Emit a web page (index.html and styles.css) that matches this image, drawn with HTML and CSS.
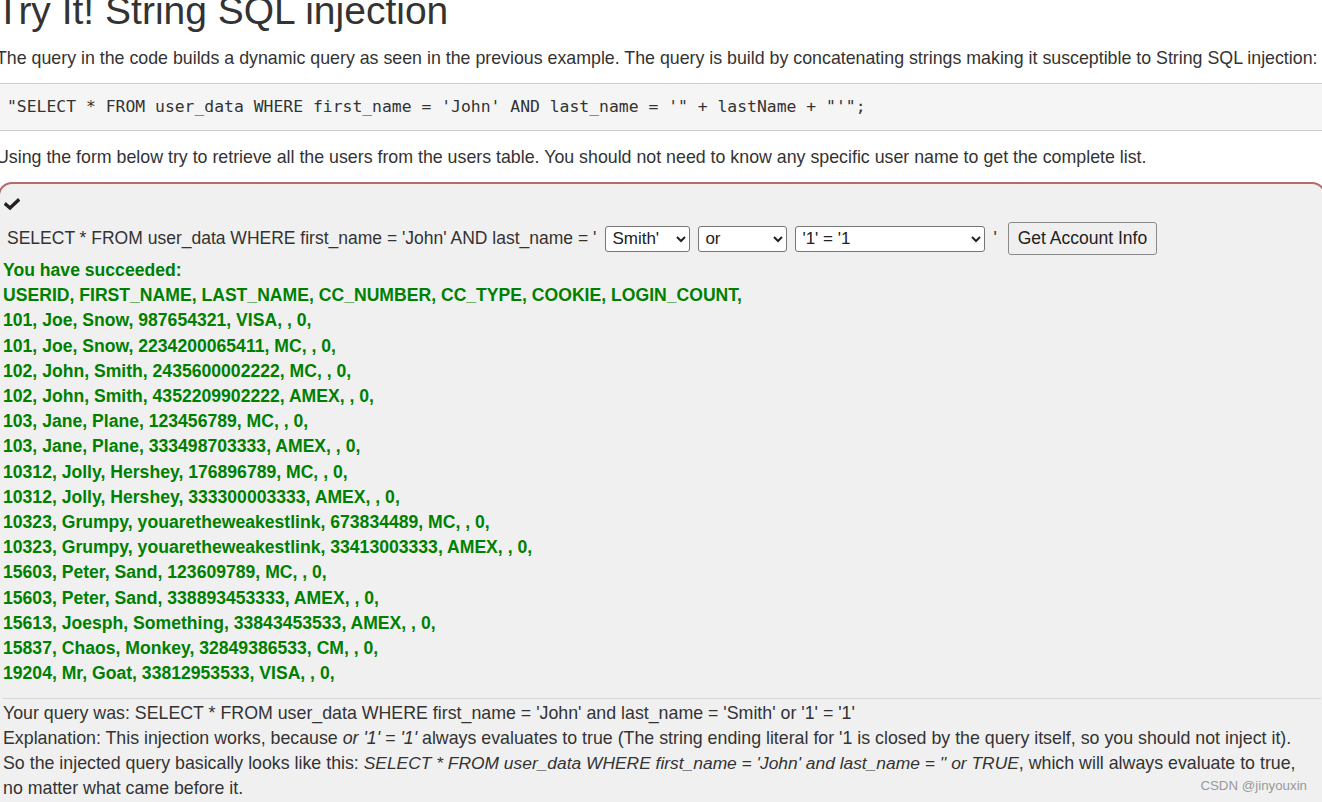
FILE: index.html
```html
<!DOCTYPE html>
<html>
<head>
<meta charset="utf-8">
<link rel="stylesheet" href="styles.css">
</head>
<body>
<div class="page">
  <h2 class="title">Try It! String SQL injection</h2>
  <p class="lead lead-1">The query in the code builds a dynamic query as seen in the previous example. The query is build by concatenating strings making it susceptible to String SQL injection:</p>
  <pre class="code">"SELECT * FROM user_data WHERE first_name = 'John' AND last_name = '" + lastName + "'";</pre>
  <p class="lead lead-2">Using the form below try to retrieve all the users from the users table. You should not need to know any specific user name to get the complete list.</p>
  <div class="attack">
    <div class="check">
      <svg width="16" height="14" viewBox="0 0 16 14"><path d="M2 7.5 L6 11 L14 3.5" fill="none" stroke="#222" stroke-width="3.4" stroke-linecap="square" stroke-linejoin="miter"/></svg>
    </div>
    <form class="form-row">
      <span class="q">SELECT * FROM user_data WHERE first_name = 'John' AND last_name = '</span>
      <select class="sel sel-a"><option>Smith'</option></select>
      <select class="sel sel-b"><option>or</option></select>
      <select class="sel sel-c"><option>'1' = '1</option></select>
      <span class="q">'</span>
      <button type="button" class="btn">Get Account Info</button>
    </form>
    <div class="output">
      <div>You have succeeded:</div>
      <div>USERID, FIRST_NAME, LAST_NAME, CC_NUMBER, CC_TYPE, COOKIE, LOGIN_COUNT, </div>
      <div>101, Joe, Snow, 987654321, VISA, , 0, </div>
      <div>101, Joe, Snow, 2234200065411, MC, , 0, </div>
      <div>102, John, Smith, 2435600002222, MC, , 0, </div>
      <div>102, John, Smith, 4352209902222, AMEX, , 0, </div>
      <div>103, Jane, Plane, 123456789, MC, , 0, </div>
      <div>103, Jane, Plane, 333498703333, AMEX, , 0, </div>
      <div>10312, Jolly, Hershey, 176896789, MC, , 0, </div>
      <div>10312, Jolly, Hershey, 333300003333, AMEX, , 0, </div>
      <div>10323, Grumpy, youaretheweakestlink, 673834489, MC, , 0, </div>
      <div>10323, Grumpy, youaretheweakestlink, 33413003333, AMEX, , 0, </div>
      <div>15603, Peter, Sand, 123609789, MC, , 0, </div>
      <div>15603, Peter, Sand, 338893453333, AMEX, , 0, </div>
      <div>15613, Joesph, Something, 33843453533, AMEX, , 0, </div>
      <div>15837, Chaos, Monkey, 32849386533, CM, , 0, </div>
      <div>19204, Mr, Goat, 33812953533, VISA, , 0, </div>
    </div>
    <hr class="sep">
    <div class="feedback">
      <div>Your query was: SELECT * FROM user_data WHERE first_name = 'John' and last_name = 'Smith' or '1' = '1'</div>
      <div>Explanation: This injection works, because <i>or '1' = '1'</i> always evaluates to true (The string ending literal for '1 is closed by the query itself, so you should not inject it).</div>
      <div>So the injected query basically looks like this: <i class="narrow">SELECT * FROM user_data WHERE first_name = 'John' and last_name = '' or TRUE</i>, which will always evaluate to true, no matter what came before it.</div>
    </div>
  </div>
</div>
<div class="watermark">CSDN @jinyouxin</div>
</body>
</html>
```

FILE: styles.css
```css
html, body {
  margin: 0;
  padding: 0;
  background: #fff;
  overflow: hidden;
}
body {
  font-family: "Liberation Sans", Arial, sans-serif;
  color: #333;
  width: 1322px;
  height: 802px;
  position: relative;
}
.page {
  margin-left: -4px;
  width: 1330px;
}
.title {
  font-size: 39px;
  font-weight: 500;
  margin: -11px 0 0 0;
  line-height: 44px;
  color: #333;
}
.lead {
  font-size: 17.8px;
  line-height: 25px;
  margin: 0;
  white-space: nowrap;
}
.lead-1 {
  margin: 13px 0 12px 0;
}
.lead-2 {
  margin: 14px 0 0 0;
}
.code {
  font-family: "DejaVu Sans Mono", monospace;
  font-size: 16.4px;
  background: #f5f5f5;
  border: 1px solid #ccc;
  border-radius: 4px;
  margin: 0;
  padding: 12px 10px;
  line-height: 22px;
  color: #333;
}
.attack {
  margin-top: 12px;
  margin-left: 2px;
  background: #f0f0f0;
  border: 2px solid #b66b6b;
  border-radius: 14px;
  height: 640px;
  padding: 0 10px 0 3px;
  box-sizing: border-box;
}
.check {
  padding-top: 13px;
  padding-left: 1px;
  height: 20px;
}
.form-row {
  display: flex;
  align-items: center;
  margin-top: 5px;
  height: 33px;
  font-size: 17.5px;
  padding-left: 4px;
}
.q {
  margin-right: 9px;
}
.sel {
  font-family: "Liberation Sans", Arial, sans-serif;
  font-size: 17px;
  height: 26px;
  margin-right: 8px;
  background: #fff;
  border: 1px solid #767676;
  border-radius: 3px;
  color: #222;
  padding: 0 2px;
}
.sel-a { width: 85px; }
.sel-b { width: 89px; }
.sel-c { width: 190px; }
.btn {
  font-family: "Liberation Sans", Arial, sans-serif;
  font-size: 17.5px;
  height: 33px;
  padding: 0 9px;
  background: #efefef;
  border: 1px solid #8a8a8a;
  border-radius: 3px;
  color: #222;
  margin-left: 2px;
}
.output {
  color: #008000;
  font-weight: bold;
  font-size: 17.6px;
  line-height: 25.2px;
  margin-top: 3px;
}
.sep {
  border: 0;
  border-top: 1px solid #d6d6d6;
  margin: 12px 0 0 0;
  width: 1318px;
}
.feedback {
  font-size: 17.8px;
  line-height: 25px;
  padding-top: 2px;
  padding-right: 2px;
}
.narrow {
  font-size: 17.4px;
}
.watermark {
  position: absolute;
  right: 15px;
  bottom: 9px;
  font-size: 13.3px;
  color: #999;
  font-family: "Liberation Sans", Arial, sans-serif;
}
```
